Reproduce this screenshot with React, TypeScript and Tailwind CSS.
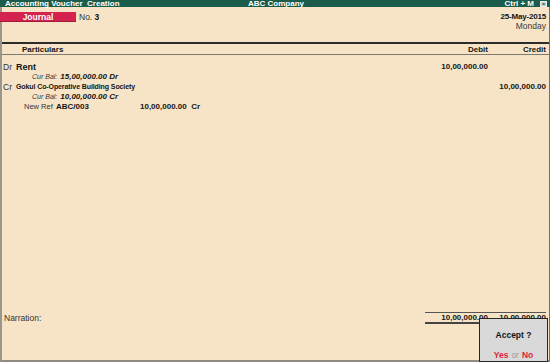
import React from "react";

const rows = [
  { kind: "ledger", side: "Dr", name: "Rent", debit: "10,00,000.00", credit: "" },
  { kind: "bal", text: "15,00,000.00 Dr" },
  { kind: "ledger", side: "Cr", name: "Gokul Co-Operative Building Society", debit: "", credit: "10,00,000.00" },
  { kind: "bal", text: "10,00,000.00 Cr" },
  { kind: "ref" },
];

export default function App() {
  return (
    <div className="relative w-[550px] h-[362px] flex flex-col overflow-hidden bg-[#f7e4c7] font-['Liberation_Sans',Arial,sans-serif] text-[#141414]">
      {/* title bar */}
      <div className="h-[7px] flex items-center bg-[#1b5c4b] text-white text-[8px] font-bold leading-[7px] pl-[5px] pr-[3px]">
        <div className="flex-1">Accounting Voucher&nbsp; Creation</div>
        <div>ABC Company</div>
        <div className="flex-1 flex justify-end items-center gap-[6px]">
          <span>Ctrl + M</span>
          <span className="w-[7px] h-[6px] bg-[#cfd8d4] border border-[#e8eeeb] text-[#1b5c4b] text-[6px] leading-[4px] text-center">×</span>
        </div>
      </div>

      <div className="flex-1 flex flex-col border-l-[2px] border-b-[2px] border-r border-l-[#9a968c] border-b-[#8f8b82] border-r-[#5b7a70]">
        {/* voucher header */}
        <div className="h-[35px] flex justify-between pr-[3px]">
          <div className="flex items-start pt-[5px]">
            <div className="-ml-[2px] w-[76px] h-[10px] bg-[#d4234e] border-b border-[#a31a3c] text-white text-[8.5px] font-bold leading-[10px] text-center">
              Journal
            </div>
            <div className="ml-[3px] text-[8.5px] leading-[10px] text-[#333]">
              No. <span className="font-bold text-[#111]">3</span>
            </div>
          </div>
          <div className="pt-[5px] text-right">
            <div className="text-[8px] font-bold leading-[10px] tracking-[-0.2px]">25-May-2015</div>
            <div className="text-[8.5px] leading-[9px] text-[#3a3a3a]">Monday</div>
          </div>
        </div>

        {/* column headers */}
        <div className="h-[2px] bg-[#2c2c2c]" />
        <div className="h-[11px] flex text-[8px] font-bold leading-[11px] border-b border-[#7d7a72] pr-[3px]">
          <div className="flex-1 pl-[20px]">Particulars</div>
          <div className="w-[60px] text-right">Debit</div>
          <div className="w-[58px] text-right">Credit</div>
        </div>

        {/* entries */}
        <div className="flex-1 flex flex-col pt-[7px] pr-[3px]">
          {rows.map((r, i) => {
            if (r.kind === "ledger")
              return (
                <div key={i} className="h-[10px] flex items-center leading-[10px]">
                  <div className="flex-1 flex items-center">
                    <span className="w-[14px] pl-[1px] text-[8.5px] text-[#333]">{r.side}</span>
                    <span className={`font-bold ${r.side === "Dr" ? "text-[9px]" : "text-[7px] tracking-[-0.1px]"}`}>{r.name}</span>
                  </div>
                  <div className="w-[60px] text-right text-[8px] font-bold">{r.debit}</div>
                  <div className="w-[58px] text-right text-[8px] font-bold">{r.credit}</div>
                </div>
              );
            if (r.kind === "bal")
              return (
                <div key={i} className="h-[10px] flex items-center leading-[10px] pl-[30px] italic">
                  <span className="text-[7px] text-[#333] mr-[3px]">Cur Bal:</span>
                  <span className="text-[8px] font-bold">{r.text}</span>
                </div>
              );
            return (
              <div key={i} className="h-[10px] flex items-center leading-[10px] pl-[22px]">
                <span className="w-[32px] text-[7.5px] text-[#333]">New Ref</span>
                <span className="w-[84px] text-[8px] font-bold">ABC/003</span>
                <span className="text-[8px] font-bold">10,00,000.00&nbsp; Cr</span>
              </div>
            );
          })}
        </div>

        {/* narration and totals */}
        <div className="h-[12px] flex items-center pr-[3px]">
          <div className="flex-1 pl-[2px] text-[8.5px] text-[#333] leading-[10px]">Narration:</div>
          <div className="w-[121px] h-[12px] flex border-t border-b-[2px] border-t-[#555] border-b-[#444] text-[8px] font-bold leading-[9px]">
            <div className="w-[63px] text-right">10,00,000.00</div>
            <div className="w-[58px] text-right">10,00,000.00</div>
          </div>
        </div>
        <div className="h-[36px]" />
      </div>

      {/* accept dialog */}
      <div className="absolute left-[479px] top-[318px] w-[69px] h-[44px] flex flex-col items-center bg-[#d9d9d9] border border-[#262626]">
        <div className="mt-[11px] text-[8.5px] font-bold leading-[10px]">Accept ?</div>
        <div className="mt-[10px] text-[8.5px] leading-[10px]">
          <span className="font-bold text-[#e3213a]">Yes</span>
          <span className="text-[#9a9a9a] mx-[3px]">or</span>
          <span className="font-bold text-[#e3213a]">No</span>
        </div>
      </div>
    </div>
  );
}
